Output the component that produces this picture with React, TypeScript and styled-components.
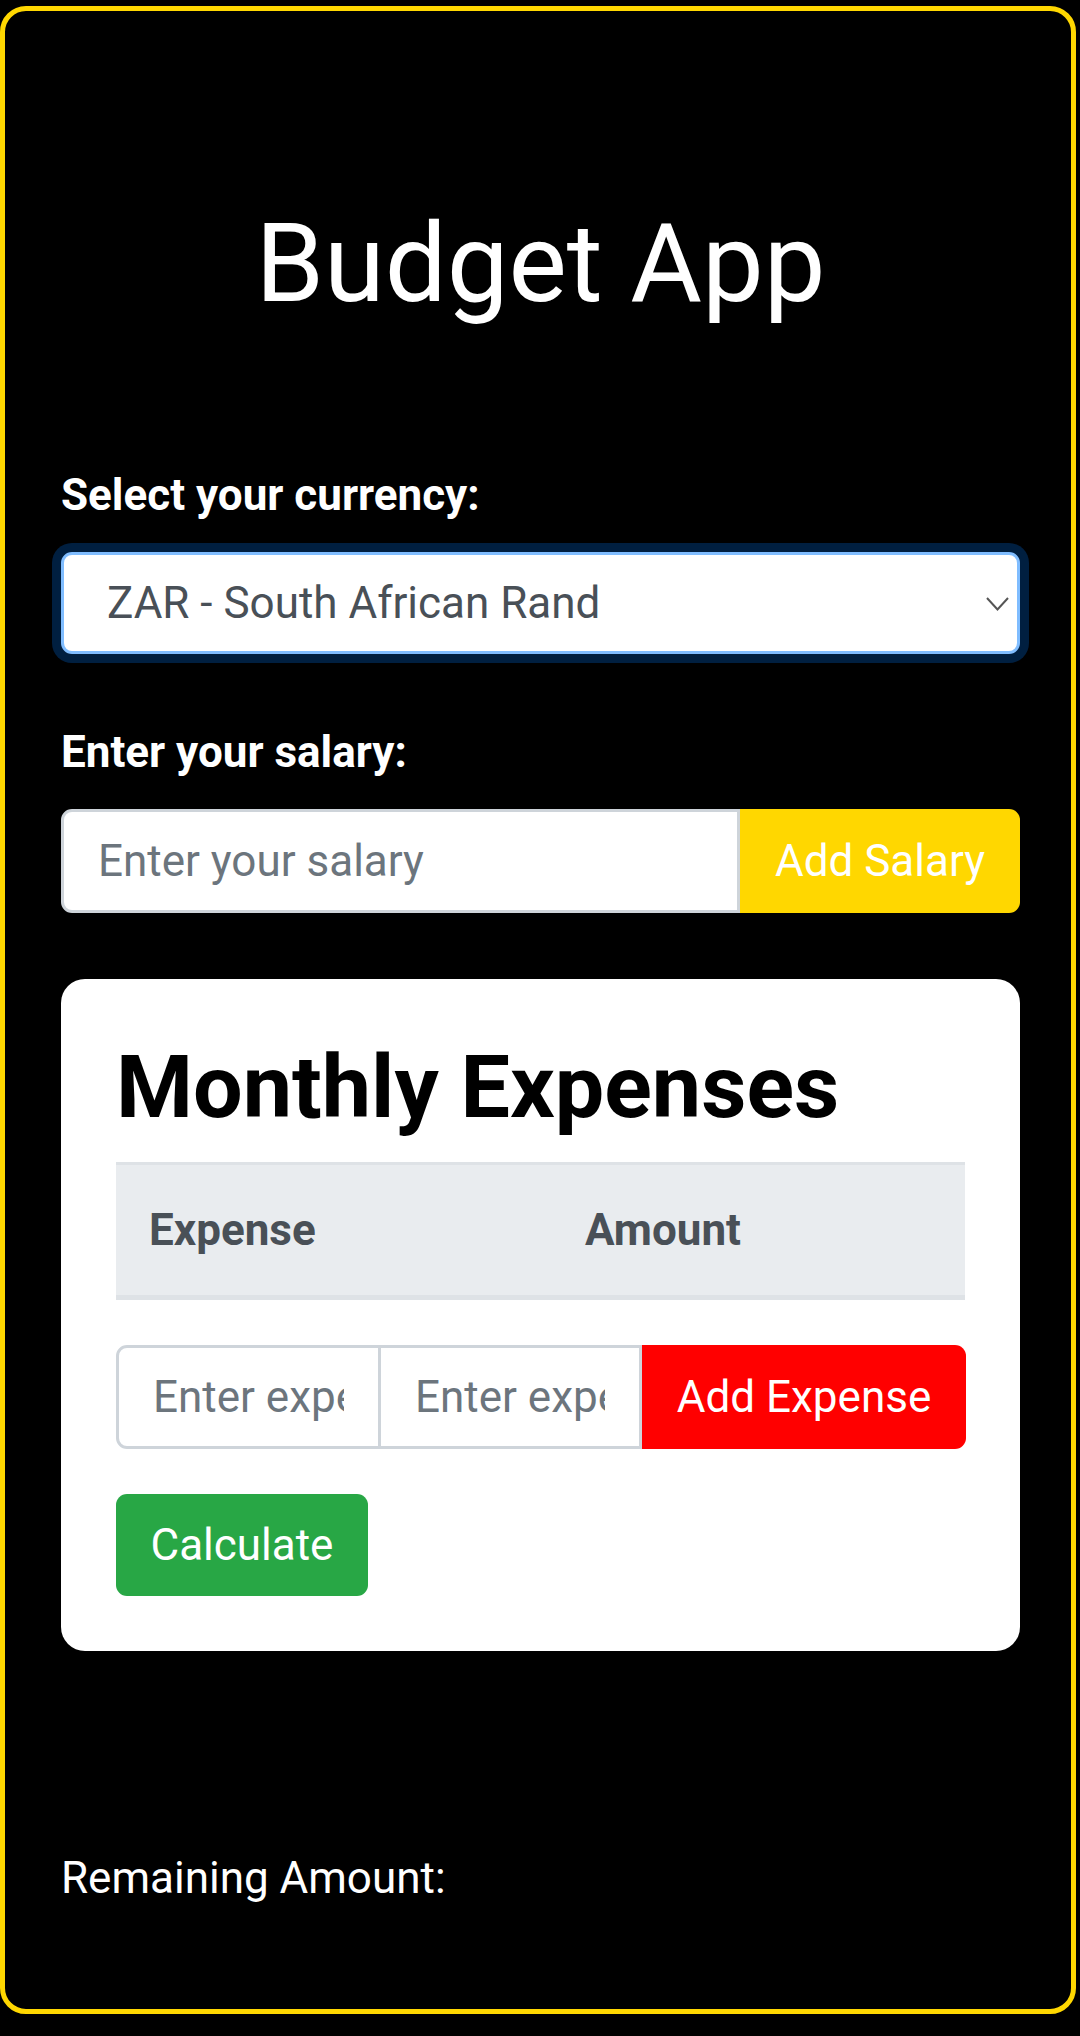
import React from 'react';
import styled, { createGlobalStyle } from 'styled-components';

const GlobalStyle = createGlobalStyle`
  html, body {
    margin: 0;
    padding: 0;
    background: #000;
  }
  body {
    font-family: Roboto, 'Liberation Sans', Arial, sans-serif;
    color: #fff;
  }
  * {
    box-sizing: border-box;
  }
`;

const Frame = styled.div`
  width: 1076px;
  height: 2008px;
  margin: 6px 0 0 0;
  border: 5px solid #ffd700;
  border-radius: 26px;
  padding: 187px 51px 0 56px;
  display: flex;
  flex-direction: column;
`;

const Title = styled.h1`
  margin: 0 0 132px;
  font-size: 110px;
  font-weight: 400;
  line-height: 1.2;
  text-align: center;
  color: #fff;
`;

const Label = styled.label`
  display: block;
  font-size: 44px;
  font-weight: 700;
  line-height: 66px;
  margin-bottom: 24px;
`;

const SelectWrap = styled.div`
  position: relative;
  height: 102px;
  margin-bottom: 65px;
`;

const Select = styled.select`
  appearance: none;
  -webkit-appearance: none;
  width: 100%;
  height: 100%;
  padding: 0 60px 0 43px;
  font-family: inherit;
  font-size: 44px;
  color: #495057;
  background: #fff;
  border: 3px solid #80bdff;
  border-radius: 11px;
  box-shadow: 0 0 0 9px #001f40; // focus ring on black
  outline: none;
`;

const Chevron = styled.svg`
  position: absolute;
  right: 11px;
  top: 45px;
  width: 23px;
  height: 14px;
  pointer-events: none;
`;

const InputGroup = styled.div<{ $mt?: number }>`
  display: flex;
  height: 104px;
  margin-top: ${p => p.$mt || 0}px;
`;

const TextInput = styled.input<{ $w?: number }>`
  ${p => (p.$w ? `width: ${p.$w}px; flex: none;` : 'flex: 1; min-width: 0;')}
  height: 100%;
  padding: 0 34px;
  font-family: inherit;
  font-size: 44px;
  color: #495057;
  background: #fff;
  border: 3px solid #ced4da;
  border-radius: 0;
  outline: none;

  &:first-child {
    border-radius: 11px 0 0 11px;
  }
  & + & {
    margin-left: -3px;
  }
  &::placeholder {
    color: #6c757d;
  }
`;

const GroupButton = styled.button<{ $bg: string; $w: number }>`
  width: ${p => p.$w}px;
  flex: none;
  height: 100%;
  border: none;
  border-radius: 0 11px 11px 0;
  background: ${p => p.$bg};
  color: #fff;
  font-family: inherit;
  font-size: 44px;
  padding: 0;
`;

const Card = styled.div`
  margin-top: 66px;
  background: #fff;
  border-radius: 24px;
  padding: 55px;
  color: #000;
`;

const CardTitle = styled.h2`
  margin: 0 0 22px;
  font-size: 88px;
  font-weight: 700;
  line-height: 1.2;
`;

const TableHead = styled.div`
  display: grid;
  grid-template-columns: 436px 1fr;
  background: #e9ecef;
  border-top: 3px solid #dee2e6;
  border-bottom: 5px solid #dee2e6;
`;

const HeadCell = styled.div`
  padding: 32px 33px;
  font-size: 44px;
  font-weight: 700;
  line-height: 66px;
  color: #495057;
`;

const CalcButton = styled.button`
  display: block;
  margin-top: 45px;
  width: 252px;
  height: 102px;
  border: none;
  border-radius: 11px;
  background: #28a745;
  color: #fff;
  font-family: inherit;
  font-size: 44px;
  padding: 0;
`;

const Remaining = styled.p`
  margin: 194px 0 0;
  font-size: 44px;
  line-height: 66px;
  color: #fff;
`;

export default function App() {
  return (
    <>
      <GlobalStyle />
      <Frame>
        <Title>Budget App</Title>

        <Label>Select your currency:</Label>
        <SelectWrap>
          <Select defaultValue="ZAR">
            <option value="ZAR">ZAR - South African Rand</option>
            <option value="USD">USD - US Dollar</option>
            <option value="EUR">EUR - Euro</option>
          </Select>
          <Chevron viewBox="0 0 23 14">
            <path d="M1 1 L11.5 12.5 L22 1" fill="none" stroke="#555" strokeWidth="2" />
          </Chevron>
        </SelectWrap>

        <Label>Enter your salary:</Label>
        <InputGroup>
          <TextInput type="number" placeholder="Enter your salary" />
          <GroupButton $bg="#ffd700" $w={280}>Add Salary</GroupButton>
        </InputGroup>

        <Card>
          <CardTitle>Monthly Expenses</CardTitle>
          <TableHead>
            <HeadCell>Expense</HeadCell>
            <HeadCell>Amount</HeadCell>
          </TableHead>
          <InputGroup $mt={45}>
            <TextInput $w={265} placeholder="Enter expense name" />
            <TextInput $w={264} placeholder="Enter expense amount" />
            <GroupButton $bg="#ff0000" $w={324}>Add Expense</GroupButton>
          </InputGroup>
          <CalcButton>Calculate</CalcButton>
        </Card>

        <Remaining>Remaining Amount:</Remaining>
      </Frame>
    </>
  );
}
